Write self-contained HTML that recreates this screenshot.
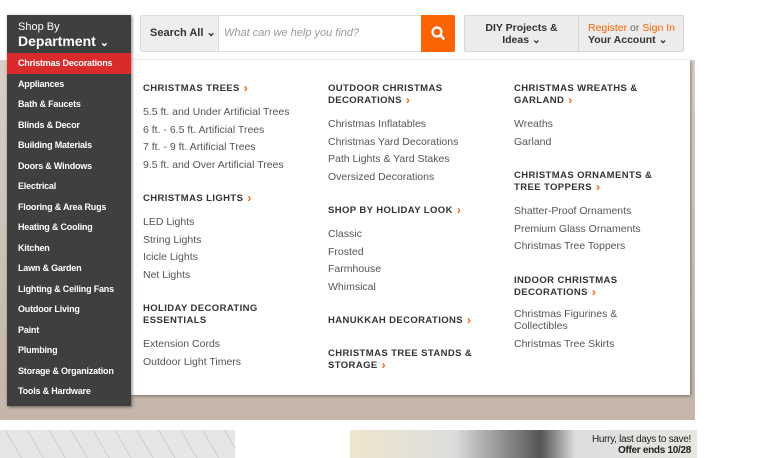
<!DOCTYPE html>
<html><head><style>
*{margin:0;padding:0;box-sizing:border-box}
body{width:760px;height:458px;background:#fff;font-family:"Liberation Sans",Arial,sans-serif;position:relative;overflow:hidden}
.hero{position:absolute;left:0;top:60px;width:695px;height:360px;background:linear-gradient(180deg,#d8cfc6 0%,#cbbfb3 60%,#c4b6a8 100%)}
.b1{position:absolute;left:0;top:430px;width:235px;height:28px;background:repeating-linear-gradient(60deg,#e6e6e6 0 18px,#cfcfcf 18px 19px)}
.b2{position:absolute;left:350px;top:430px;width:347px;height:28px;background:linear-gradient(90deg,#efe6cf,#ddd 30%,#555 55%,#ddd 65%,#e8e6df)}
.b2 .t{position:absolute;right:6px;top:4px;font-size:10px;text-align:right;line-height:11px;color:#222;letter-spacing:-.3px}
.dept{position:absolute;left:7px;top:15px;width:124px;height:391px;background:#3f3f3f;box-shadow:1px 1px 3px rgba(0,0,0,.5)}
.dept .h{color:#fff;padding:6px 0 0 11px;font-size:11px;line-height:12px}
.dept .h b{font-size:14px;display:block;line-height:16px}
.dept ul{list-style:none;position:absolute;top:38px;left:0;width:124px}
.dept li{height:20.5px;line-height:20.5px;padding-left:11px;color:#fff;font-size:9px;font-weight:bold;letter-spacing:-.2px}
.dept li.a{background:#d92b2b}
.search{position:absolute;left:140px;top:15px;width:315px;height:37px;border:1px solid #ddd;border-radius:2px;background:#fff}
.sa{position:absolute;left:0;top:0;width:78px;height:35px;background:#eee;border-right:1px solid #ddd;font-size:11px;font-weight:bold;line-height:35px;padding-left:9px;color:#333}
.ph{position:absolute;left:83px;top:0;line-height:35px;font-size:11px;font-style:italic;color:#999}
.go{position:absolute;right:-1px;top:-1px;width:34px;height:37px;background:#f96302;border-radius:0 2px 2px 0}
.nav{position:absolute;left:464px;top:15px;width:220px;height:37px;background:#ececec;border:1px solid #d8d8d8;border-radius:2px;font-size:10.5px;font-weight:bold;color:#333;line-height:12px}
.nav .d{position:absolute;left:0;top:6px;width:113px;text-align:center}
.nav .r{position:absolute;left:113px;top:0;height:35px;border-left:1px solid #d8d8d8;padding:6px 0 0 9px;width:105px}
.panel{position:absolute;left:131px;top:60px;width:559px;height:335px;background:#fff;box-shadow:1px 1px 3px rgba(0,0,0,.4)}
.col{position:absolute;top:23px;width:180px}
.col h4{font-size:9.5px;font-weight:bold;color:#333;letter-spacing:.4px;line-height:12px;margin-bottom:9px}
.col h4 i{color:#f96302;font-style:normal;margin-left:4px;font-size:12px;font-weight:bold;display:inline-block;height:12px;line-height:12px;vertical-align:top;position:relative;top:-1px}
.col a{display:block;font-size:10.5px;color:#555;line-height:17.5px;text-decoration:none}
.col .g{height:19px}
</style></head><body>
<div class="hero"></div>
<div class="b1"></div>
<div class="b2"><div class="t">Hurry, last days to save!<br><b>Offer ends 10/28</b></div></div>
<div class="search"><div class="sa">Search All ⌄</div><div class="ph">What can we help you find?</div><div class="go"><svg width="34" height="37" viewBox="0 0 34 37"><circle cx="16" cy="17" r="4.5" fill="none" stroke="#fff" stroke-width="2.2"/><line x1="19.3" y1="20.3" x2="22.5" y2="23.5" stroke="#fff" stroke-width="2.5" stroke-linecap="round"/></svg></div></div>
<div class="nav"><div class="d">DIY Projects &amp;<br>Ideas ⌄</div><div class="r"><span style="color:#f96302;font-weight:normal">Register</span> <span style="font-weight:normal;color:#666">or</span> <span style="color:#f96302;font-weight:normal">Sign In</span><br>Your Account ⌄</div></div>
<div class="panel">
<div class="col" style="left:12px">
<h4>CHRISTMAS TREES<i>›</i></h4>
<a>5.5 ft. and Under Artificial Trees</a><a>6 ft. - 6.5 ft. Artificial Trees</a><a>7 ft. - 9 ft. Artificial Trees</a><a>9.5 ft. and Over Artificial Trees</a><div class="g"></div>
<h4>CHRISTMAS LIGHTS<i>›</i></h4>
<a>LED Lights</a><a>String Lights</a><a>Icicle Lights</a><a>Net Lights</a><div class="g"></div>
<h4>HOLIDAY DECORATING<br>ESSENTIALS</h4>
<a>Extension Cords</a><a>Outdoor Light Timers</a>
</div>
<div class="col" style="left:197px">
<h4>OUTDOOR CHRISTMAS<br>DECORATIONS<i>›</i></h4>
<a>Christmas Inflatables</a><a>Christmas Yard Decorations</a><a>Path Lights &amp; Yard Stakes</a><a>Oversized Decorations</a><div class="g"></div>
<h4>SHOP BY HOLIDAY LOOK<i>›</i></h4>
<a>Classic</a><a>Frosted</a><a>Farmhouse</a><a>Whimsical</a><div class="g"></div>
<h4>HANUKKAH DECORATIONS<i>›</i></h4><div style="height:12px"></div>
<h4>CHRISTMAS TREE STANDS &amp;<br>STORAGE<i>›</i></h4>
</div>
<div class="col" style="left:383px">
<h4>CHRISTMAS WREATHS &amp;<br>GARLAND<i>›</i></h4>
<a>Wreaths</a><a>Garland</a><div class="g"></div>
<h4>CHRISTMAS ORNAMENTS &amp;<br>TREE TOPPERS<i>›</i></h4>
<a>Shatter-Proof Ornaments</a><a>Premium Glass Ornaments</a><a>Christmas Tree Toppers</a><div class="g"></div>
<h4>INDOOR CHRISTMAS<br>DECORATIONS<i>›</i></h4>
<a style="line-height:12px;margin:2px 0 4px">Christmas Figurines &amp;<br>Collectibles</a><a>Christmas Tree Skirts</a>
</div>
</div>
<div class="dept"><div class="h">Shop By<b>Department <span style="font-size:11px">⌄</span></b></div>
<ul><li class="a">Christmas Decorations</li><li>Appliances</li><li>Bath &amp; Faucets</li><li>Blinds &amp; Decor</li><li>Building Materials</li><li>Doors &amp; Windows</li><li>Electrical</li><li>Flooring &amp; Area Rugs</li><li>Heating &amp; Cooling</li><li>Kitchen</li><li>Lawn &amp; Garden</li><li>Lighting &amp; Ceiling Fans</li><li>Outdoor Living</li><li>Paint</li><li>Plumbing</li><li>Storage &amp; Organization</li><li>Tools &amp; Hardware</li></ul></div>
</body></html>
